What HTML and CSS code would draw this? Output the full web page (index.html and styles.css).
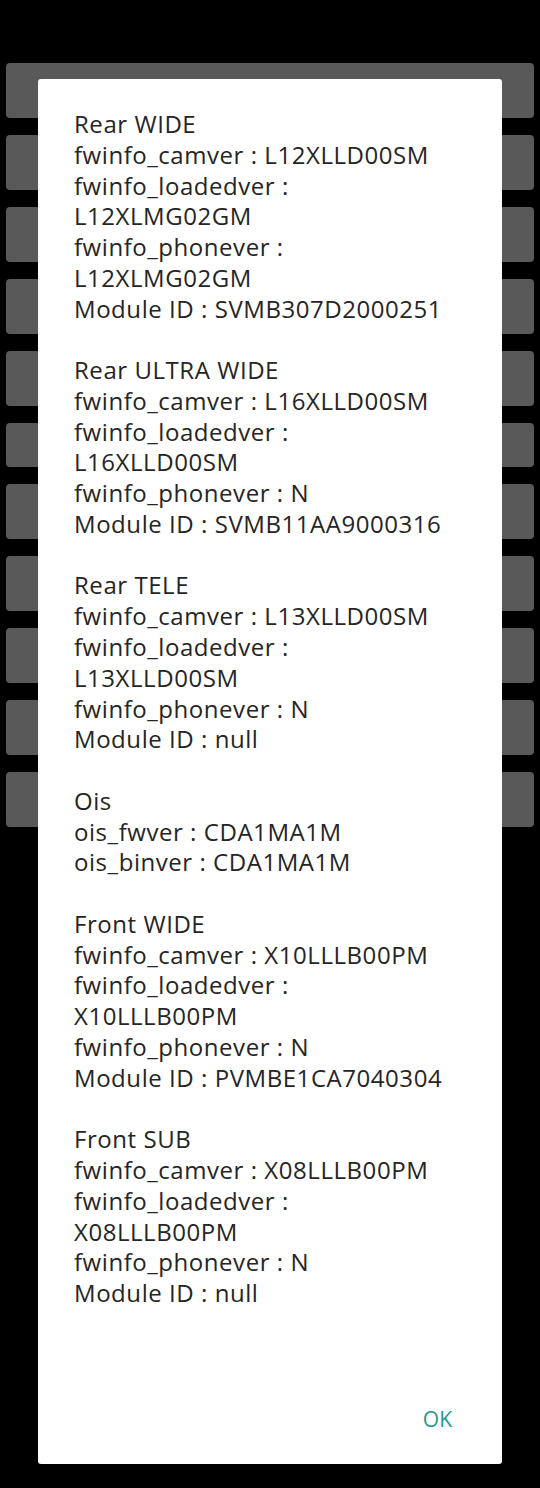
FILE: index.html
```html
<!DOCTYPE html>
<html>
<head>
<meta charset="utf-8">
<link rel="stylesheet" href="styles.css">
</head>
<body>
<div class="screen">
  <div class="list">
    <div class="bar"></div>
    <div class="bar"></div>
    <div class="bar"></div>
    <div class="bar"></div>
    <div class="bar"></div>
    <div class="bar short"></div>
    <div class="bar"></div>
    <div class="bar"></div>
    <div class="bar"></div>
    <div class="bar"></div>
    <div class="bar"></div>
  </div>
  <div class="dialog">
    <div class="msg">Rear WIDE
fwinfo_camver : L12XLLD00SM
fwinfo_loadedver :
L12XLMG02GM
fwinfo_phonever :
L12XLMG02GM
Module ID : SVMB307D2000251

Rear ULTRA WIDE
fwinfo_camver : L16XLLD00SM
fwinfo_loadedver :
L16XLLD00SM
fwinfo_phonever : N
Module ID : SVMB11AA9000316

Rear TELE
fwinfo_camver : L13XLLD00SM
fwinfo_loadedver :
L13XLLD00SM
fwinfo_phonever : N
Module ID : null

Ois
ois_fwver : CDA1MA1M
ois_binver : CDA1MA1M

Front WIDE
fwinfo_camver : X10LLLB00PM
fwinfo_loadedver :
X10LLLB00PM
fwinfo_phonever : N
Module ID : PVMBE1CA7040304

Front SUB
fwinfo_camver : X08LLLB00PM
fwinfo_loadedver :
X08LLLB00PM
fwinfo_phonever : N
Module ID : null</div>
    <div class="actions"><span class="ok">OK</span></div>
  </div>
</div>
</body>
</html>
```
FILE: styles.css
```css
html, body {
  margin: 0;
  padding: 0;
  background: #000;
}
.screen {
  position: relative;
  width: 540px;
  height: 1488px;
  background: #000;
  overflow: hidden;
}
.list {
  display: flex;
  flex-direction: column;
  gap: 17px;
  padding: 63px 6px 0 6px;
}
.bar {
  height: 55px;
  background: #595959;
  border-radius: 4px;
}
.bar.short {
  height: 44px;
}
.dialog {
  position: absolute;
  left: 38px;
  top: 79px;
  width: 464px;
  height: 1385px;
  background: #fff;
  border-radius: 3px;
  box-sizing: border-box;
  display: flex;
  flex-direction: column;
}
.msg {
  padding: 30px 10px 0 36px;
  white-space: pre-line;
  font-family: "Open Sans", sans-serif;
  font-size: 24px;
  letter-spacing: 0.55px;
  line-height: 30.77px;
  color: #252525;
  flex: 1;
}
.actions {
  display: flex;
  justify-content: flex-end;
  padding: 0 50px 31px 0;
}
.ok {
  font-family: "Open Sans", sans-serif;
  font-size: 21px;
  color: #1f9a8c;
}
```
